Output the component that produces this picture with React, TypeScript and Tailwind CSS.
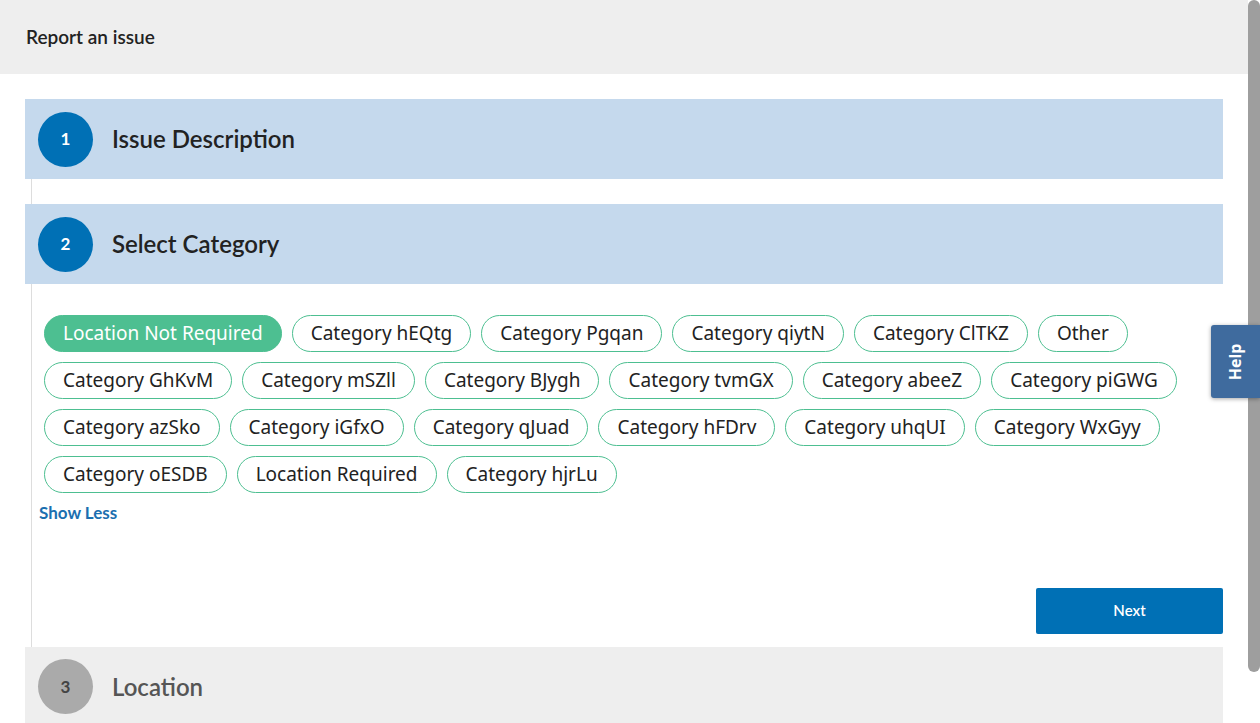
import React from "react";

const categories = [
  "Location Not Required",
  "Category hEQtg",
  "Category Pgqan",
  "Category qiytN",
  "Category ClTKZ",
  "Other",
  "Category GhKvM",
  "Category mSZll",
  "Category BJygh",
  "Category tvmGX",
  "Category abeeZ",
  "Category piGWG",
  "Category azSko",
  "Category iGfxO",
  "Category qJuad",
  "Category hFDrv",
  "Category uhqUI",
  "Category WxGyy",
  "Category oESDB",
  "Location Required",
  "Category hjrLu",
];

const headFont = { fontFamily: "Lato, 'Noto Sans', sans-serif" };

function StepHeader({ n, title, active }: { n: number; title: string; active: boolean }) {
  return (
    <div className={`flex items-center h-[80px] pl-[13px] ${active ? "bg-[#c5d9ed]" : "bg-[#eeeeee]"}`}>
      <div
        className={`w-[55px] h-[55px] rounded-full flex items-center justify-center text-[17px] font-bold ${
          active ? "bg-[#0070b5] text-white" : "bg-[#aaaaaa] text-[#444]"
        }`}
      >
        {n}
      </div>
      <div className={`ml-[19px] text-[24px] font-semibold ${active ? "text-[#222]" : "text-[#555]"}`}>{title}</div>
    </div>
  );
}

export default function App() {
  const selected = "Location Not Required";
  return (
    <div className="flex h-[723px] w-[1260px] overflow-hidden bg-white relative" style={headFont}>
      <div className="w-[1248px] flex flex-col">
        {/* header */}
        <div className="h-[74px] bg-[#eeeeee] flex items-center pl-[26px] shrink-0">
          <span className="text-[19px] font-semibold text-[#222]">Report an issue</span>
        </div>

        <div className="pl-[25px] pr-[25px] pt-[25px] flex flex-col">
          <StepHeader n={1} title="Issue Description" active />
          <div className="ml-[6px] h-[25px] border-l border-[#dddddd]" />
          <StepHeader n={2} title="Select Category" active />

          <div className="ml-[6px] border-l border-[#dddddd] flex flex-col pb-[13px]">
            <div className="flex flex-wrap gap-x-[10px] gap-y-[10px] pl-[12px] pr-[20px] pt-[31px]" style={{ fontFamily: "'Noto Sans', sans-serif" }}>
              {categories.map((c) => (
                <div
                  key={c}
                  className={`h-[37px] px-[18px] rounded-full border flex items-center text-[19px] ${
                    c === selected
                      ? "bg-[#4dbf91] border-[#4dbf91] text-white"
                      : "border-[#4dbf91] text-[#222] bg-white"
                  }`}
                >
                  {c}
                </div>
              ))}
            </div>
            <div className="pl-[7px] mt-[7px] text-[17px] font-bold text-[#1b6fb0]">Show Less</div>
            <div className="flex justify-end mt-[62px]">
              <button className="w-[187px] h-[46px] rounded-[2px] bg-[#0070b5] text-white text-[15px] font-semibold">
                Next
              </button>
            </div>
          </div>

          <StepHeader n={3} title="Location" active={false} />
        </div>
      </div>

      {/* scrollbar */}
      <div className="w-[12px] bg-white flex flex-col">
        <div className="h-[672px] bg-[#9e9e9e] rounded-full" />
      </div>

      {/* help tab */}
      <div className="absolute left-[1211px] top-[325px] w-[49px] h-[73px] bg-[#3f6b9e] rounded-l-[3px] shadow-[0_1px_4px_rgba(0,0,0,0.35)] flex items-center justify-center">
        <span className="-rotate-90 text-white text-[16px] font-bold" style={{ fontFamily: "'Noto Sans', sans-serif" }}>
          Help
        </span>
      </div>
    </div>
  );
}
